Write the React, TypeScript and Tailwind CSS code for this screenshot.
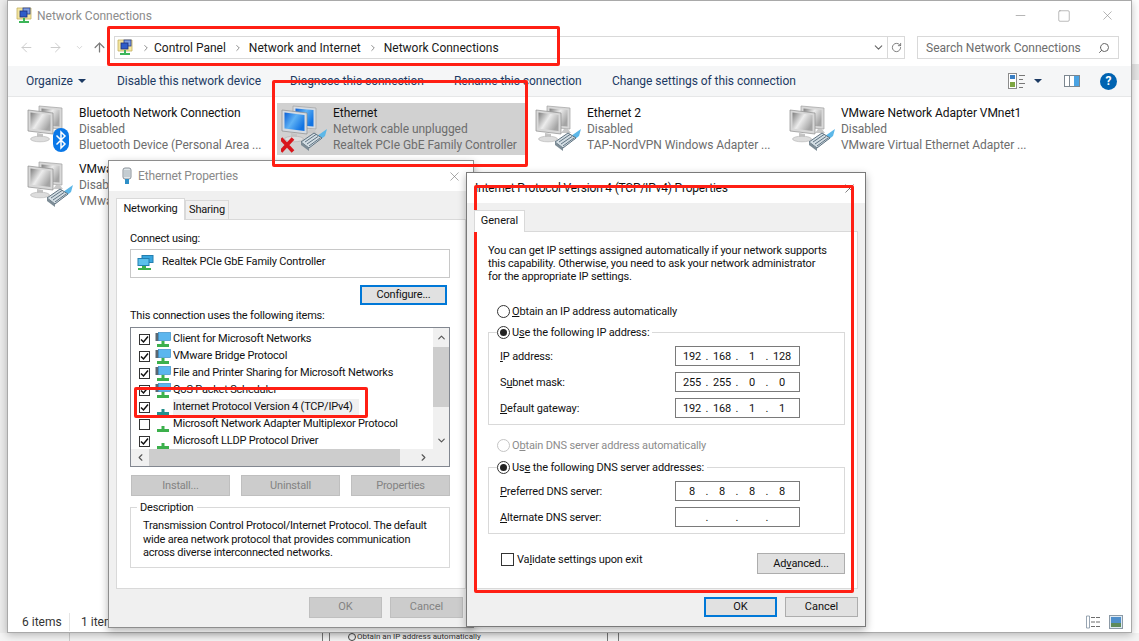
import React from 'react';
import { ArrowLeft, ArrowRight, ArrowUp, ChevronDown, ChevronUp, ChevronLeft, ChevronRight, RotateCw, Search, X, Minus, Square } from 'lucide-react';

const connections = [
  { name: 'Bluetooth Network Connection', status: 'Disabled', device: 'Bluetooth Device (Personal Area ...', kind: 'bluetooth' },
  { name: 'Ethernet', status: 'Network cable unplugged', device: 'Realtek PCIe GbE Family Controller', kind: 'unplugged' },
  { name: 'Ethernet 2', status: 'Disabled', device: 'TAP-NordVPN Windows Adapter ...', kind: 'plug' },
  { name: 'VMware Network Adapter VMnet1', status: 'Disabled', device: 'VMware Virtual Ethernet Adapter ...', kind: 'plug' },
  { name: 'VMware Network Adapter VMnet8', status: 'Disabled', device: 'VMware Virtual Ethernet Adapter ...', kind: 'plug' },
];

const components = [
  { label: 'Client for Microsoft Networks', checked: true, icon: 'pc' },
  { label: 'VMware Bridge Protocol', checked: true, icon: 'pc' },
  { label: 'File and Printer Sharing for Microsoft Networks', checked: true, icon: 'pc' },
  { label: 'QoS Packet Scheduler', checked: true, icon: 'pc' },
  { label: 'Internet Protocol Version 4 (TCP/IPv4)', checked: true, icon: 'selected' },
  { label: 'Microsoft Network Adapter Multiplexor Protocol', checked: false, icon: 'proto' },
  { label: 'Microsoft LLDP Protocol Driver', checked: true, icon: 'proto' },
];

const Monitors = ({ active }: { active: boolean }) => {
  const id = active ? 'screen-on' : 'screen-off';
  const frame = active ? '#d5dbe2' : '#d8d8d8';
  return (
    <g>
      <defs>
        <linearGradient id={id} x1="0" y1="0" x2="1" y2="0.6">
          <stop offset="0" stopColor={active ? '#0a5fd6' : '#7d7d7d'} />
          <stop offset="0.5" stopColor={active ? '#5fb2f5' : '#ececec'} />
          <stop offset="1" stopColor={active ? '#1273e2' : '#a4a4a4'} />
        </linearGradient>
      </defs>
      <path d="M12 1 L35 3 L35 24 L12 22 Z" fill={frame} stroke="#a0a0a0" strokeWidth="0.7" />
      <path d="M14.500 3.500 L32.500 5 L32.500 21.500 L14.500 20 Z" fill={`url(#${id})`} />
      <path d="M29 24 L26 28 L36 28 L33 24 Z" fill="#c8c8c8" />
      <path d="M1 5 L26 8 L26 29 L1 26 Z" fill={frame} stroke="#8e8e8e" strokeWidth="0.7" />
      <path d="M3.500 7.500 L23.500 10 L23.500 26 L3.500 23.500 Z" fill={`url(#${id})`} />
      <path d="M10 28 L16 29 L16 32 L10 32 Z" fill="#c4c4c4" />
      <ellipse cx="13" cy="34" rx="9.500" ry="2.800" fill="#dddddd" stroke="#b0b0b0" strokeWidth="0.6" />
    </g>
  );
};

const Plug = () => (
  <g>
    <path d="M36 31 L46 24 L44 31 L39 35 Z" fill="#5cb7e8" />
    <path d="M20 37 L33 28 L41 33 L28 43 Z" fill="#d3dde3" stroke="#5f7280" strokeWidth="1" />
    <path d="M24 37 L35 29.500 M26 39 L37 31.500 M28 41 L39 33" stroke="#5f7382" strokeWidth="1" />
    <path d="M20 37 L20 40 L28 46 L28 43 Z" fill="#7d8c96" />
  </g>
);

const AdapterIcon = ({ kind }: { kind: string }) => (
  <svg width="48" height="48" viewBox="0 0 48 48" className="shrink-0">
    <Monitors active={kind === 'unplugged'} />
    {kind === 'bluetooth' ? (
      <g>
        <rect x="26" y="23" width="16" height="24" rx="8" fill="#0a78e8" />
        <path d="M29.500 30.500 L38 39 L34 43 L34 27 L38 31 L29.500 39.500" fill="none" stroke="#ffffff" strokeWidth="1.500" />
      </g>
    ) : (
      <Plug />
    )}
    {kind === 'unplugged' && (
      <path d="M0 33.500 L12 46.500 M12 33.500 L0 46.500" stroke="#d8161c" strokeWidth="3.600" />
    )}
  </svg>
);

// little folder + network glyph used in the title bar and the address bar
const ControlPanelIcon = () => (
  <svg width="17" height="17" viewBox="0 0 17 17" className="shrink-0">
    <path d="M1 1 H15 V12 H1 Z" fill="#f4e6a0" stroke="#c4b060" strokeWidth="0.8" />
    <rect x="7" y="1" width="7" height="6" fill="#7f9ee0" stroke="#2a3f8f" strokeWidth="0.8" />
    <rect x="4" y="4" width="7" height="6" fill="#2f5cc8" stroke="#1d2f7a" strokeWidth="0.8" />
    <path d="M8 11 V14 M3 15 H13" stroke="#3cb558" strokeWidth="2" />
  </svg>
);

const ComponentIcon = ({ kind }: { kind: string }) => (
  <svg width="16" height="16" viewBox="0 0 16 16" className="shrink-0">
    {kind === 'pc' && (
      <g>
        <rect x="0.500" y="1" width="4" height="8" fill="#5b6770" />
        <rect x="3.500" y="0.500" width="12" height="8" fill="#5cb6ee" stroke="#3d8fc6" strokeWidth="0.7" />
      </g>
    )}
    <path
      d="M6.500 9 H9.500 V12 H14 V15 H2 V12 H6.500 Z"
      fill={kind === 'selected' ? '#23908c' : '#3cb04c'}
    />
  </svg>
);

const Radio = ({ on = false, disabled = false }: { on?: boolean; disabled?: boolean }) => (
  <span className={`flex w-[13px] h-[13px] shrink-0 items-center justify-center rounded-full border bg-white ${disabled ? 'border-[#c4c4c4]' : 'border-[#333333]'}`}>
    {on && <span className="w-[7px] h-[7px] rounded-full bg-[#222222]" />}
  </span>
);

const Check = ({ on }: { on: boolean }) => (
  <span className="flex w-[11px] h-[11px] shrink-0 items-center justify-center border border-[#333333] bg-white">
    {on && (
      <svg width="9" height="9" viewBox="0 0 9 9">
        <path d="M1 4.500 L3.500 7 L8 1.500" fill="none" stroke="#111111" strokeWidth="1.500" />
      </svg>
    )}
  </span>
);

const DialogButton = ({ label, className }: { label: React.ReactNode; className: string }) => (
  <div className={`flex items-center justify-center text-[11px] ${className}`}>{label}</div>
);

const IpField = ({ parts }: { parts: string[] }) => (
  <div className="flex h-[20px] w-[125px] items-center border border-[#7a7a7a] bg-white pl-[5px] text-[11px] text-[#111111]">
    {parts.map((part, i) => (
      <React.Fragment key={i}>
        <span className="w-[22px] text-center">{part}</span>
        {i < 3 && <span className="w-[8px] text-center">.</span>}
      </React.Fragment>
    ))}
  </div>
);

const FieldRow = ({ label, parts }: { label: React.ReactNode; parts: string[] }) => (
  <div className="flex h-[20px] items-center justify-between">
    <span className="text-[#111111]">{label}</span>
    <IpField parts={parts} />
  </div>
);

const Annotation = ({ className }: { className: string }) => (
  <div className={`absolute border-[3px] border-[#ff1f14] rounded-[2px] ${className}`} />
);

const ExplorerWindow = () => (
  <div className="absolute left-[7px] top-0 flex h-[633px] w-[1125px] flex-col bg-white border border-[#a9a9a9] shadow-[0_2px_8px_rgba(0,0,0,0.25)]">
    <div className="flex h-[31px] shrink-0 items-center pb-[2px] pl-[8px]">
      <ControlPanelIcon />
      <span className="ml-[4px] text-[12px] text-[#8c8c8c]">Network Connections</span>
      <div className="ml-auto flex items-center gap-[29px] pr-[16px] text-[#8a8a8a]">
        <Minus size={15} strokeWidth={1} />
        <Square size={14} strokeWidth={1} />
        <X size={15} strokeWidth={1} />
      </div>
    </div>

    <div className="flex h-[34px] shrink-0 items-center pb-[3px] pl-[11px]">
      <ArrowLeft size={15} strokeWidth={1.500} className="text-[#c9c9c9]" />
      <ArrowRight size={15} strokeWidth={1.500} className="ml-[14px] text-[#c9c9c9]" />
      <ChevronDown size={9} className="ml-[12px] text-[#c9c9c9]" />
      <ArrowUp size={15} strokeWidth={2} className="ml-[8px] text-[#7b7b7b]" />
      <div className="ml-[7px] flex h-[23px] w-[791px] items-center border border-[#d9d9d9] pl-[2px] text-[12px] text-[#1a1a1a]">
        <ControlPanelIcon />
        <ChevronRight size={10} className="ml-[7px] text-[#777777]" />
        <span className="ml-[3px]">Control Panel</span>
        <ChevronRight size={10} className="ml-[7px] text-[#777777]" />
        <span className="ml-[6px]">Network and Internet</span>
        <ChevronRight size={10} className="ml-[7px] text-[#777777]" />
        <span className="ml-[6px]">Network Connections</span>
        <ChevronDown size={13} strokeWidth={2} className="ml-auto mr-[2px] text-[#666666]" />
        <div className="flex h-full w-[17px] items-center justify-center border-l border-[#d9d9d9]">
          <RotateCw size={11} strokeWidth={1.800} className="text-[#666666]" />
        </div>
      </div>
      <div className="ml-[12px] flex h-[23px] w-[202px] items-center justify-between border border-[#d9d9d9] pl-[8px] pr-[8px] text-[12px] text-[#6d6d6d]">
        <span>Search Network Connections</span>
        <Search size={12} strokeWidth={2} className="-scale-x-100 text-[#666666]" />
      </div>
    </div>

    <div className="flex h-[31px] shrink-0 items-center border-b border-[#e6e7e8] bg-[#f5f6f7] text-[12px] tracking-[-0.05px] text-[#1c3a63]">
      <span className="ml-[18px] w-[91px] flex items-center gap-[5px]">
        Organize
        <span className="w-0 h-0 border-x-[4px] border-x-transparent border-t-[4px] border-t-[#1c3a63]" />
      </span>
      <span className="w-[173px]">Disable this network device</span>
      <span className="w-[164px]">Diagnose this connection</span>
      <span className="w-[158px]">Rename this connection</span>
      <span>Change settings of this connection</span>
      <div className="ml-auto mr-[14px] flex items-center">
        <svg width="18" height="18" viewBox="0 0 18 18">
          <rect x="0.500" y="1.500" width="8" height="15" fill="#ffffff" stroke="#8c8c8c" />
          <rect x="2" y="3" width="5" height="4" fill="#3a7fc4" />
          <rect x="2" y="10" width="5" height="5" fill="#7da642" />
          <path d="M11 3.500 H17 M11 7.500 H15 M11 11.500 H17 M11 15.500 H15" stroke="#777777" strokeWidth="1" />
        </svg>
        <span className="ml-[8px] w-0 h-0 border-x-[4px] border-x-transparent border-t-[4px] border-t-[#1c3a63]" />
        <svg width="16" height="12" viewBox="0 0 16 12" className="ml-[22px]">
          <rect x="0.500" y="0.500" width="15" height="11" fill="#ffffff" stroke="#7c8790" />
          <rect x="10" y="1" width="5" height="10" fill="#4aa3e3" />
          <path d="M5.500 1 V11" stroke="#7c8790" />
        </svg>
        <div className="ml-[20px] flex h-[17px] w-[17px] items-center justify-center rounded-full bg-[#0063b1] text-[12px] font-bold text-white">?</div>
      </div>
    </div>

    <div className="grid flex-1 grid-cols-[254px_254px_254px_254px] content-start gap-y-[4px] pl-[15px] pt-[6px]">
      {connections.map((c) => (
        <div key={c.name} className={`flex h-[52px] w-[248px] p-[2px] pl-[4px] ${c.kind === 'unplugged' ? 'bg-[#d1d1d1]' : ''}`}>
          <div className="w-[52px] shrink-0"><AdapterIcon kind={c.kind} /></div>
          <div className="flex flex-col text-[12px] leading-[16px] tracking-[-0.05px] text-[#6d6d6d] whitespace-nowrap">
            <span className="text-[#111111]">{c.name}</span>
            <span>{c.status}</span>
            <span>{c.device}</span>
          </div>
        </div>
      ))}
    </div>

    <div className="flex h-[23px] shrink-0 items-center pl-[14px] pt-[3px] text-[12px] text-[#333333]">
      <span className="w-[48px] border-r border-[#e5e5e5]">6 items</span>
      <span className="ml-[11px]">1 item selected</span>
      <div className="ml-auto mr-[8px] flex items-center gap-[7px]">
        <svg width="16" height="14" viewBox="0 0 16 14">
          <path d="M0.500 1 H3.500 V13 H0.500 Z" fill="#ffffff" stroke="#7f8fa0" strokeWidth="0.800" />
          <path d="M5 2.500 H15 M5 7 H15 M5 11.500 H15" stroke="#6d6d6d" strokeDasharray="4 1" />
        </svg>
        <svg width="14" height="14" viewBox="0 0 14 14">
          <rect x="0.500" y="0.500" width="13" height="13" fill="#dfeaf2" stroke="#8c9aa6" />
          <rect x="2" y="2" width="10" height="6" fill="#4f8fcb" />
          <rect x="2" y="8" width="10" height="4" fill="#5d8a5a" />
        </svg>
      </div>
    </div>
  </div>
);

const EthernetDialog = () => (
  <div className="absolute left-[108px] top-[160px] flex h-[468px] w-[366px] flex-col bg-[#f0f0f0] border border-[#8e8e8e] shadow-[0_3px_8px_rgba(0,0,0,0.3)]">
    <div className="flex h-[30px] shrink-0 items-center bg-white pl-[11px] text-[12px] tracking-[-0.15px] text-[#8a8a8a]">
      <svg width="14" height="18" viewBox="0 0 14 18" className="shrink-0">
        <rect x="3" y="1" width="8" height="11" rx="2" fill="#dfe6ea" stroke="#8a9198" />
        <path d="M5 3 V10 M7 3 V10 M9 3 V10" stroke="#a9b2b8" />
        <path d="M5 12 H9 V17 H5 Z" fill="#2f8fc7" />
      </svg>
      <span className="ml-[4px]">Ethernet Properties</span>
      <X size={15} strokeWidth={1} className="ml-auto mr-[11px] text-[#777777]" />
    </div>
    <div className="flex h-[28px] shrink-0 items-end pl-[7px] text-[11px] tracking-[-0.2px] text-[#111111]">
      <div className="relative z-10 -mb-px flex h-[22px] w-[69px] items-center justify-center border border-b-0 border-[#d9d9d9] bg-white">Networking</div>
      <div className="flex h-[19px] w-[44px] items-center justify-center border border-b-0 border-[#d9d9d9] bg-[#f0f0f0]">Sharing</div>
    </div>
    <div className="mx-[7px] flex h-[370px] shrink-0 flex-col border border-[#d9d9d9] bg-white pl-[13px] pr-[10px] text-[11px] tracking-[-0.2px] text-[#111111]">
      <div className="mt-[11px] leading-[16px]">Connect using:</div>
      <div className="mt-[2px] flex h-[29px] w-[320px] items-center border border-[#c8c8c8] pb-[2px] pl-[6px]">
        <svg width="17" height="16" viewBox="0 0 17 16">
          <rect x="5" y="0.500" width="11" height="7" fill="#38a6df" stroke="#237fb0" />
          <rect x="1" y="3.500" width="11" height="7" fill="#5cc0ec" stroke="#237fb0" />
          <path d="M5 11 H9 V13 H14 V15 H1 V13 H5 Z" fill="#3cb04c" />
        </svg>
        <span className="ml-[8px]">Realtek PCIe GbE Family Controller</span>
      </div>
      <div className="mt-[7px] flex justify-end pr-[8px]">
        <DialogButton label="Configure..." className="h-[20px] w-[87px] border-2 border-[#0078d7] bg-[#e1e1e1]" />
      </div>
      <div className="mt-[3px] leading-[16px]">This connection uses the following items:</div>
      <div className="mt-[3px] flex h-[140px] w-[320px] flex-col border border-[#828790]">
        <div className="flex h-[121px] shrink-0">
          <div className="flex-1 pl-[8px] pt-[3px]">
            {components.map((item) => (
              <div key={item.label} className="flex h-[17px] items-center whitespace-nowrap">
                <Check on={item.checked} />
                <span className="ml-[5px]"><ComponentIcon kind={item.icon} /></span>
                <span className={`ml-[2px] pr-[6px] ${item.icon === 'selected' ? 'bg-[#f0f0f0]' : ''}`}>{item.label}</span>
              </div>
            ))}
          </div>
          <div className="flex w-[16px] shrink-0 flex-col items-center bg-[#f0f0f0] text-[#555555]">
            <ChevronUp size={11} strokeWidth={2.500} className="mt-[4px]" />
            <div className="mt-[4px] h-[60px] w-full bg-[#cdcdcd]" />
            <ChevronDown size={11} strokeWidth={2.500} className="mt-auto mb-[3px]" />
          </div>
        </div>
        <div className="flex h-[17px] items-center bg-[#f0f0f0] text-[#555555]">
          <ChevronLeft size={11} strokeWidth={2.500} className="ml-[4px]" />
          <div className="ml-[3px] h-full w-[251px] bg-[#cdcdcd]" />
          <ChevronRight size={11} strokeWidth={2.500} className="ml-[18px]" />
        </div>
      </div>
      <div className="mt-[8px] flex w-[320px] justify-between pl-[1px] text-[#838383]">
        <DialogButton label="Install..." className="h-[21px] w-[99px] border border-[#bfbfbf] bg-[#cccccc] pt-px" />
        <DialogButton label="Uninstall" className="h-[21px] w-[99px] border border-[#bfbfbf] bg-[#cccccc] pt-px" />
        <DialogButton label="Properties" className="h-[21px] w-[99px] border border-[#bfbfbf] bg-[#cccccc] pt-px" />
      </div>
      <div className="relative mt-[11px] h-[61px] w-[320px] whitespace-nowrap border border-[#d9d9d9] pl-[12px] pt-[11px] leading-[13.500px]">
        <span className="absolute -top-[8px] left-[6px] bg-white px-[3px] leading-[16px]">Description</span>
        Transmission Control Protocol/Internet Protocol. The default
        <br />
        wide area network protocol that provides communication
        <br />
        across diverse interconnected networks.
      </div>
    </div>
    <div className="mt-[8px] flex justify-end gap-[8px] pr-[10px] text-[#838383]">
      <DialogButton label="OK" className="h-[21px] w-[73px] border border-[#bfbfbf] bg-[#cccccc]" />
      <DialogButton label="Cancel" className="h-[21px] w-[73px] border border-[#bfbfbf] bg-[#cccccc]" />
    </div>
  </div>
);

const Ipv4Dialog = () => (
  <div className="absolute left-[466px] top-[172px] flex h-[455px] w-[400px] flex-col bg-[#f0f0f0] border border-[#7a7a7a] shadow-[0_3px_8px_rgba(0,0,0,0.3)]">
    <div className="flex h-[30px] shrink-0 items-center bg-white pl-[8px] text-[12px] tracking-[-0.2px] text-[#111111]">
      <span>Internet Protocol Version 4 (TCP/IPv4) Properties</span>
      <X size={15} strokeWidth={1} className="ml-auto mr-[8px] text-[#333333]" />
    </div>
    <div className="flex h-[28px] shrink-0 items-end pl-[7px] text-[11px] text-[#111111]">
      <div className="relative z-10 -mb-px flex h-[22px] w-[51px] items-center justify-center border border-b-0 border-[#d9d9d9] bg-white">General</div>
    </div>
    <div className="mx-[7px] flex h-[358px] shrink-0 flex-col border border-[#d9d9d9] bg-white pl-[13px] pr-[10px] text-[11px] leading-[13px] tracking-[-0.15px] text-[#111111]">
      <p className="mt-[12px] whitespace-nowrap">
        You can get IP settings assigned automatically if your network supports
        <br />
        this capability. Otherwise, you need to ask your network administrator
        <br />
        for the appropriate IP settings.
      </p>
      <label className="mt-[21px] ml-[9px] flex h-[14px] items-center gap-[2px]">
        <Radio /> <span><u>O</u>btain an IP address automatically</span>
      </label>
      <div className="relative mt-[14px] flex h-[93px] w-[357px] shrink-0 flex-col gap-[6px] border border-[#d9d9d9] pl-[11px] pr-[44px] pt-[13px]">
        <label className="absolute -top-[8px] left-[8px] flex h-[14px] items-center gap-[2px] bg-white pr-[3px]">
          <Radio on /> <span>U<u>s</u>e the following IP address:</span>
        </label>
        <FieldRow label={<><u>I</u>P address:</>} parts={['192', '168', '1', '128']} />
        <FieldRow label={<>S<u>u</u>bnet mask:</>} parts={['255', '255', '0', '0']} />
        <FieldRow label={<><u>D</u>efault gateway:</>} parts={['192', '168', '1', '1']} />
      </div>
      <label className="mt-[13px] ml-[9px] flex h-[14px] items-center gap-[2px] text-[#8c8c8c]">
        <Radio disabled /> <span>O<u>b</u>tain DNS server address automatically</span>
      </label>
      <div className="relative mt-[15px] flex h-[67px] w-[357px] shrink-0 flex-col gap-[6px] border border-[#d9d9d9] pl-[11px] pr-[44px] pt-[13px]">
        <label className="absolute -top-[8px] left-[8px] flex h-[14px] items-center gap-[2px] bg-white pr-[3px]">
          <Radio on /> <span>Us<u>e</u> the following DNS server addresses:</span>
        </label>
        <FieldRow label={<><u>P</u>referred DNS server:</>} parts={['8', '8', '8', '8']} />
        <FieldRow label={<><u>A</u>lternate DNS server:</>} parts={['', '', '', '']} />
      </div>
      <div className="mt-[19px] flex w-[357px] items-start justify-between pl-[13px]">
        <label className="flex items-center gap-[3px]">
          <span className="h-[13px] w-[13px] border border-[#333333]" />
          <span>Va<u>l</u>idate settings upon exit</span>
        </label>
        <DialogButton label={<>Ad<u>v</u>anced...</>} className="h-[21px] w-[88px] border border-[#adadad] bg-[#e1e1e1]" />
      </div>
    </div>
    <div className="mt-[8px] flex justify-end gap-[8px] pr-[7px] text-[#111111]">
      <DialogButton label="OK" className="h-[20px] w-[73px] border-2 border-[#0078d7] bg-[#e1e1e1]" />
      <DialogButton label="Cancel" className="h-[20px] w-[73px] border border-[#adadad] bg-[#e1e1e1]" />
    </div>
  </div>
);

const App: React.FC = () => {
  return (
    <div className="relative h-[641px] w-[1139px] overflow-hidden bg-white font-['Roboto','Liberation_Sans',sans-serif]">
      {/* desktop behind the explorer window */}
      <div className="absolute left-0 top-0 h-full w-[7px] bg-[#ececec]" />
      <div className="absolute right-0 top-[64px] h-[16px] w-[7px] bg-[#e6e6e6]" />

      {/* window peeking out underneath */}
      <div className="absolute inset-x-0 bottom-0 h-[8px] bg-[#f4f4f4] text-[8px] leading-[8px] text-[#333333]">
        <div className="absolute left-[69px] top-0 h-full w-px bg-[#cccccc]" />
        <div className="absolute left-[322px] top-0 h-full w-[8px] border-x border-[#777777]" />
        <div className="absolute left-[348px] top-0 flex items-center gap-[1px] whitespace-nowrap">
          <span className="h-[8px] w-[8px] rounded-full border border-[#444444]" />
          Obtain an IP address automatically
        </div>
        <div className="absolute left-[607px] top-0 h-full w-[12px] border-x border-[#777777]" />
      </div>

      <ExplorerWindow />
      <EthernetDialog />
      <Ipv4Dialog />

      <Annotation className="left-[107px] top-[26px] h-[40px] w-[453px]" />
      <Annotation className="left-[272px] top-[80px] h-[87px] w-[256px]" />
      <Annotation className="left-[134px] top-[387px] h-[31px] w-[234px]" />
      <Annotation className="left-[474px] top-[185px] h-[408px] w-[380px]" />
    </div>
  );
};

export default App;
